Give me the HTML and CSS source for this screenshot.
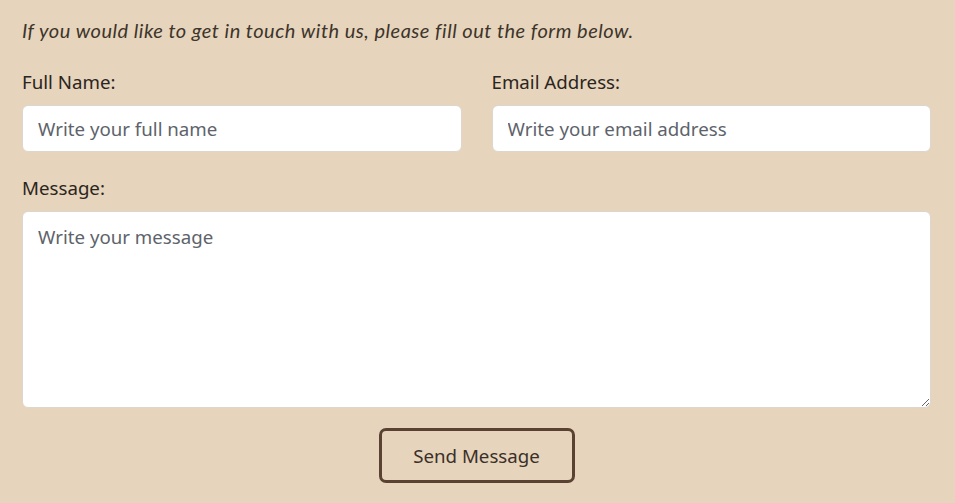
FILE: index.html
```html
<!DOCTYPE html>
<html lang="en">
<head>
<meta charset="utf-8">
<title>Contact</title>
<link rel="stylesheet" href="styles.css">
</head>
<body>
<form class="contact">
  <p class="intro">If you would like to get in touch with us, please fill out the form below.</p>
  <div class="row">
    <div class="field">
      <label class="label" for="name">Full Name:</label>
      <input class="input" id="name" type="text" placeholder="Write your full name">
    </div>
    <div class="field">
      <label class="label" for="email">Email Address:</label>
      <input class="input" id="email" type="email" placeholder="Write your email address">
    </div>
  </div>
  <div class="field">
    <label class="label" for="msg">Message:</label>
    <textarea class="input textarea" id="msg" placeholder="Write your message"></textarea>
  </div>
  <div class="actions">
    <button class="btn" type="button">Send Message</button>
  </div>
</form>
</body>
</html>
```
FILE: styles.css
```css
html, body {
  margin: 0;
  padding: 0;
  background: #e6d4bc;
}
.contact {
  padding: 15px 24px 0 22px;
  font-family: "Noto Sans", "Open Sans", sans-serif;
  color: #2b2520;
}
.intro {
  margin: 0 0 24px;
  font-family: Lato, "Open Sans", sans-serif;
  font-style: italic;
  font-weight: 400;
  font-size: 20px;
  letter-spacing: 0.5px;
  line-height: 30px;
  color: #3d342b;
}
.row {
  display: grid;
  grid-template-columns: 1fr 1fr;
  column-gap: 30px;
}
.field {
  display: flex;
  flex-direction: column;
}
.label {
  font-size: 18.7px;
  line-height: 26px;
  margin-bottom: 10px;
}
.input {
  box-sizing: border-box;
  height: 47px;
  width: 100%;
  border: 1px solid #ddd6cc;
  border-radius: 6px;
  background: #fff;
  padding: 0 15px;
  font-family: "Noto Sans", "Open Sans", sans-serif;
  font-size: 18.7px;
  color: #333;
  margin-bottom: 23px;
}
.input::placeholder {
  color: #5e636b;
}
.textarea {
  height: 197px;
  padding: 12px 15px;
  resize: vertical;
  margin-bottom: 20px;
}
.actions {
  display: flex;
  justify-content: center;
}
.btn {
  box-sizing: border-box;
  width: 196px;
  height: 55px;
  background: transparent;
  border: 3px solid #5a4232;
  border-radius: 7px;
  font-family: "Noto Sans", "Open Sans", sans-serif;
  font-size: 18.7px;
  color: #3a3028;
  cursor: pointer;
}
```
